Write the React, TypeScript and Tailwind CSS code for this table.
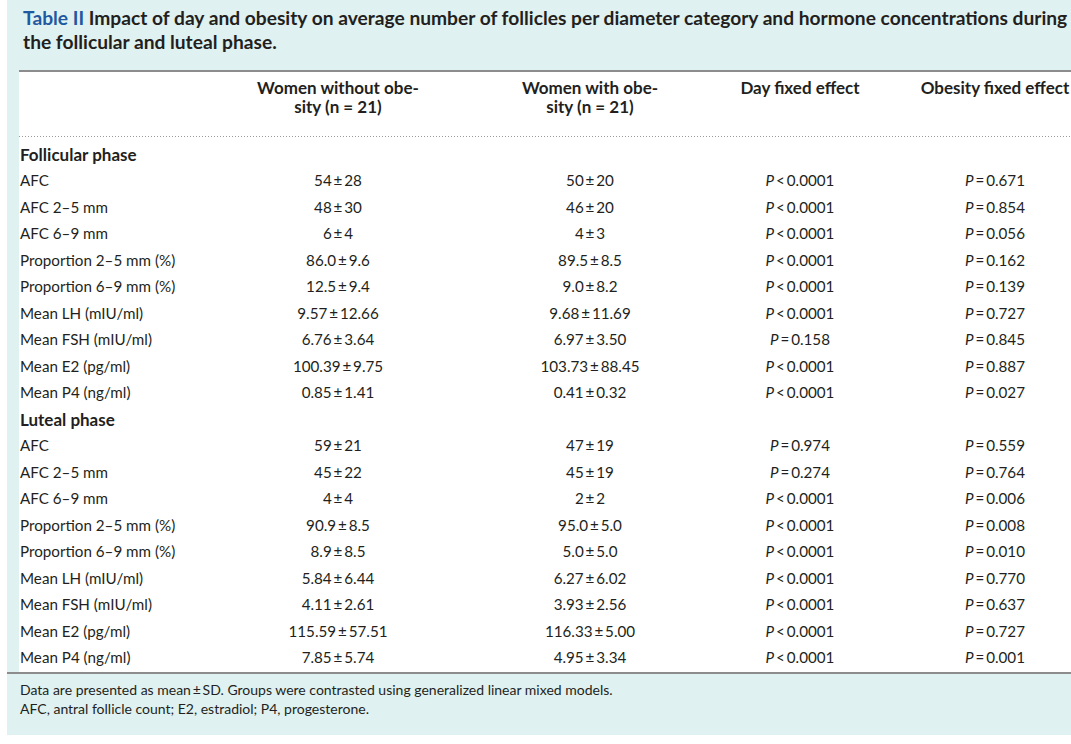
const font = { fontFamily: "Lato, 'Open Sans', sans-serif" };

type Row = [string, string, string, string, string];

const follicular: Row[] = [
  ["AFC", "54 ± 28", "50 ± 20", "<0.0001", "0.671"],
  ["AFC 2–5 mm", "48 ± 30", "46 ± 20", "<0.0001", "0.854"],
  ["AFC 6–9 mm", "6 ± 4", "4 ± 3", "<0.0001", "0.056"],
  ["Proportion 2–5 mm (%)", "86.0 ± 9.6", "89.5 ± 8.5", "<0.0001", "0.162"],
  ["Proportion 6–9 mm (%)", "12.5 ± 9.4", "9.0 ± 8.2", "<0.0001", "0.139"],
  ["Mean LH (mIU/ml)", "9.57 ± 12.66", "9.68 ± 11.69", "<0.0001", "0.727"],
  ["Mean FSH (mIU/ml)", "6.76 ± 3.64", "6.97 ± 3.50", "=0.158", "0.845"],
  ["Mean E2 (pg/ml)", "100.39 ± 9.75", "103.73 ± 88.45", "<0.0001", "0.887"],
  ["Mean P4 (ng/ml)", "0.85 ± 1.41", "0.41 ± 0.32", "<0.0001", "0.027"],
];

const luteal: Row[] = [
  ["AFC", "59 ± 21", "47 ± 19", "=0.974", "0.559"],
  ["AFC 2–5 mm", "45 ± 22", "45 ± 19", "=0.274", "0.764"],
  ["AFC 6–9 mm", "4 ± 4", "2 ± 2", "<0.0001", "0.006"],
  ["Proportion 2–5 mm (%)", "90.9 ± 8.5", "95.0 ± 5.0", "<0.0001", "0.008"],
  ["Proportion 6–9 mm (%)", "8.9 ± 8.5", "5.0 ± 5.0", "<0.0001", "0.010"],
  ["Mean LH (mIU/ml)", "5.84 ± 6.44", "6.27 ± 6.02", "<0.0001", "0.770"],
  ["Mean FSH (mIU/ml)", "4.11 ± 2.61", "3.93 ± 2.56", "<0.0001", "0.637"],
  ["Mean E2 (pg/ml)", "115.59 ± 57.51", "116.33 ± 5.00", "<0.0001", "0.727"],
  ["Mean P4 (ng/ml)", "7.85 ± 5.74", "4.95 ± 3.34", "<0.0001", "0.001"],
];

const cols = "grid grid-cols-[212px_214px_290px_130px_260px]";

function pm(v: string) {
  return v.replace(" ± ", "\u2009±\u2009");
}

function PVal({ v }: { v: string }) {
  const op = v[0] === "<" || v[0] === "=" ? v[0] : "=";
  const num = op === v[0] ? v.slice(1) : v;
  return (
    <span>
      <i>P</i>
      {"\u2009" + op + "\u2009" + num}
    </span>
  );
}

function DataRow({ row }: { row: Row }) {
  return (
    <div className={`${cols} h-[26.5px] items-center`}>
      <div className="pl-px">{row[0]}</div>
      <div className="text-center">{pm(row[1])}</div>
      <div className="text-center">{pm(row[2])}</div>
      <div className="text-center">
        <PVal v={row[3]} />
      </div>
      <div className="text-center">
        <PVal v={row[4]} />
      </div>
    </div>
  );
}

function Section({ title, rows }: { title: string; rows: Row[] }) {
  return (
    <>
      <div className="flex h-[26.5px] items-center pl-px text-[17px] font-bold">{title}</div>
      {rows.map((r, i) => (
        <DataRow key={title + i} row={r} />
      ))}
    </>
  );
}

export default function App() {
  return (
    <div className="h-[744px] w-[1071px] overflow-hidden bg-white text-[#231f20]" style={font}>
      <div className="ml-[7px] flex h-[735px] w-[1110px] flex-col bg-[#e0f1f1]">
        <h1 className="whitespace-nowrap pl-4 pt-[6px] text-[19.2px] font-bold leading-6">
          <span className="text-[#1f5aa0]">Table II</span> Impact of day and obesity on average number of follicles per diameter category and hormone concentrations during
          <br />
          the follicular and luteal phase.
        </h1>

        <div className="ml-3 mt-[16px] bg-white text-[15.2px]">
          <div className="h-[2px] bg-[#8c8c8c]" />
          <div className={`${cols} pt-[6px] pb-[20px] text-center text-[17px] font-bold leading-[19px]`}>
            <div />
            <div>
              Women without obe-
              <br />
              sity (n = 21)
            </div>
            <div>
              Women with obe-
              <br />
              sity (n = 21)
            </div>
            <div className="whitespace-nowrap">Day fixed effect</div>
            <div className="whitespace-nowrap">Obesity fixed effect</div>
          </div>
          <div className="h-px bg-[repeating-linear-gradient(90deg,#9a9a9a_0_1px,transparent_1px_3px)]" />
          <div className="pt-[4px] pb-[1px]">
            <Section title="Follicular phase" rows={follicular} />
            <Section title="Luteal phase" rows={luteal} />
          </div>
        </div>
        <div className="h-[2px] bg-[#8c8c8c]" />
        <div className="pl-[13px] pt-[6px] text-[14px] leading-[19px]">
          <p>Data are presented as mean{"\u2009±\u2009"}SD. Groups were contrasted using generalized linear mixed models.</p>
          <p>AFC, antral follicle count; E2, estradiol; P4, progesterone.</p>
        </div>
      </div>
    </div>
  );
}
